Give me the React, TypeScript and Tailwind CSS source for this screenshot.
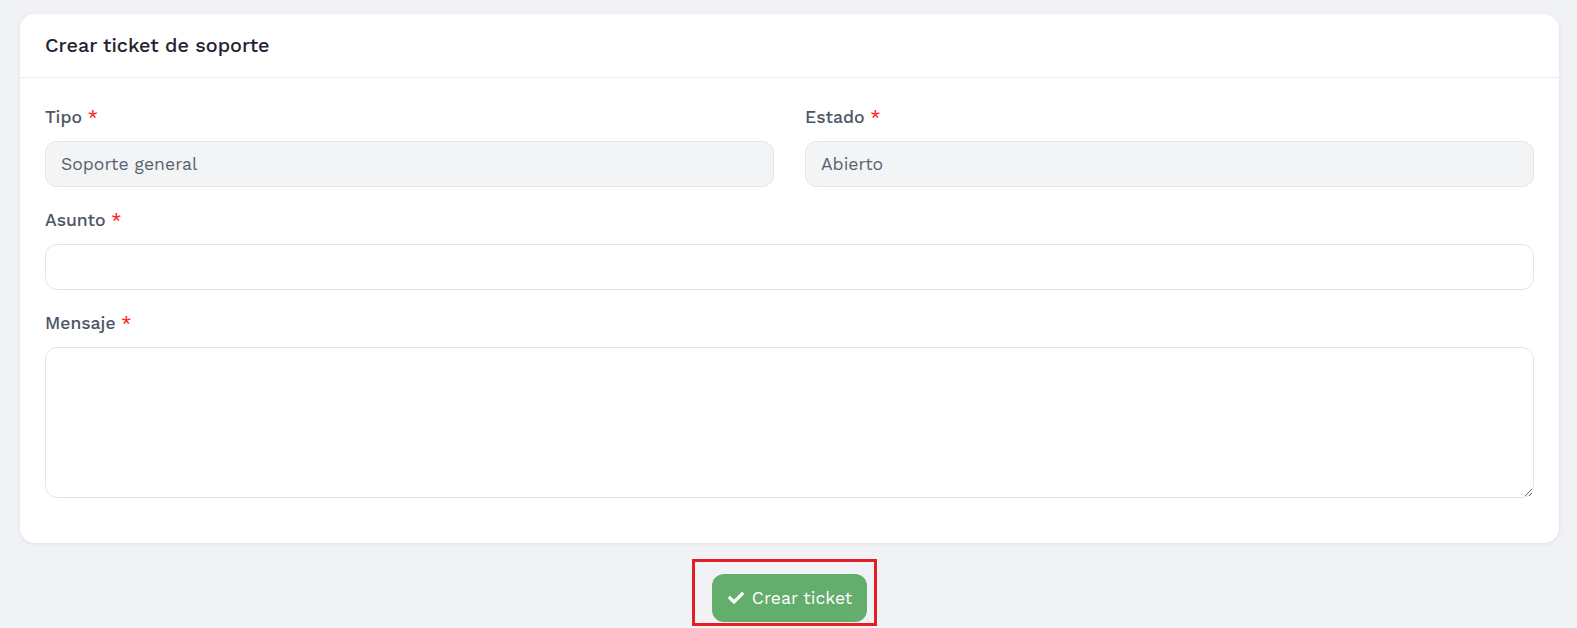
import React from "react";

function Label({ children }: { children: React.ReactNode }) {
  return (
    <label className="block h-6 mb-3 text-[17.6px] leading-6 font-medium text-[#4e5564]">
      {children} <span className="text-[#ff1a1a]">*</span>
    </label>
  );
}

const fieldBox =
  "h-[46px] rounded-[12px] border border-[#e3e5e9] bg-[#f3f4f6] px-[15px] flex items-center text-[17.6px] text-[#5a6170]";

export default function App() {
  return (
    <div className="min-h-[628px] w-full bg-[#f1f2f6] pl-5 pr-[18px] pt-[14px] font-['Work_Sans','Open_Sans',sans-serif]">
      <div className="rounded-[15px] bg-white shadow-[0_1px_4px_rgba(30,40,60,0.08)]">
        <div className="h-[64px] flex items-center px-[25px] border-b border-[#eceef1]">
          <h1 className="text-[19.8px] font-medium text-[#1f2430]">Crear ticket de soporte</h1>
        </div>
        <div className="px-[25px] pt-[27px] pb-[24px]">
          <div className="grid grid-cols-2 gap-x-[31px]">
            <div className="mb-[21px]">
              <Label>Tipo</Label>
              <div className={fieldBox}>Soporte general</div>
            </div>
            <div className="mb-[21px]">
              <Label>Estado</Label>
              <div className={fieldBox}>Abierto</div>
            </div>
          </div>
          <div className="mb-[21px]">
            <Label>Asunto</Label>
            <input className="block w-full h-[46px] rounded-[12px] border border-[#e3e5e9] bg-white px-[15px] outline-none" />
          </div>
          <div className="mb-[21px]">
            <Label>Mensaje</Label>
            <textarea className="block w-full h-[151px] rounded-[12px] border border-[#e3e5e9] bg-white px-[15px] py-2 outline-none" />
          </div>
        </div>
      </div>
      <div className="flex justify-center pt-[31px]">
        <div className="relative">
          <button className="h-[48px] w-[155px] rounded-[12px] bg-[#63ad6d] text-white text-[17.6px] flex items-center justify-center gap-[7px]">
            <svg width="18" height="16" viewBox="0 0 512 512" fill="white">
              <path d="M173.9 439.4l-166.4-166.4c-10-10-10-26.2 0-36.2l36.2-36.2c10-10 26.2-10 36.2 0L192 312.7 432.1 72.6c10-10 26.2-10 36.2 0l36.2 36.2c10 10 10 26.2 0 36.2l-294.4 294.4c-10 10-26.2 10-36.2 0z" />
            </svg>
            <span>Crear ticket</span>
          </button>
          <div className="pointer-events-none absolute left-[-20px] right-[-10px] top-[-15px] bottom-[-4px] border-[3px] border-[#e31e24]" />
        </div>
      </div>
    </div>
  );
}
